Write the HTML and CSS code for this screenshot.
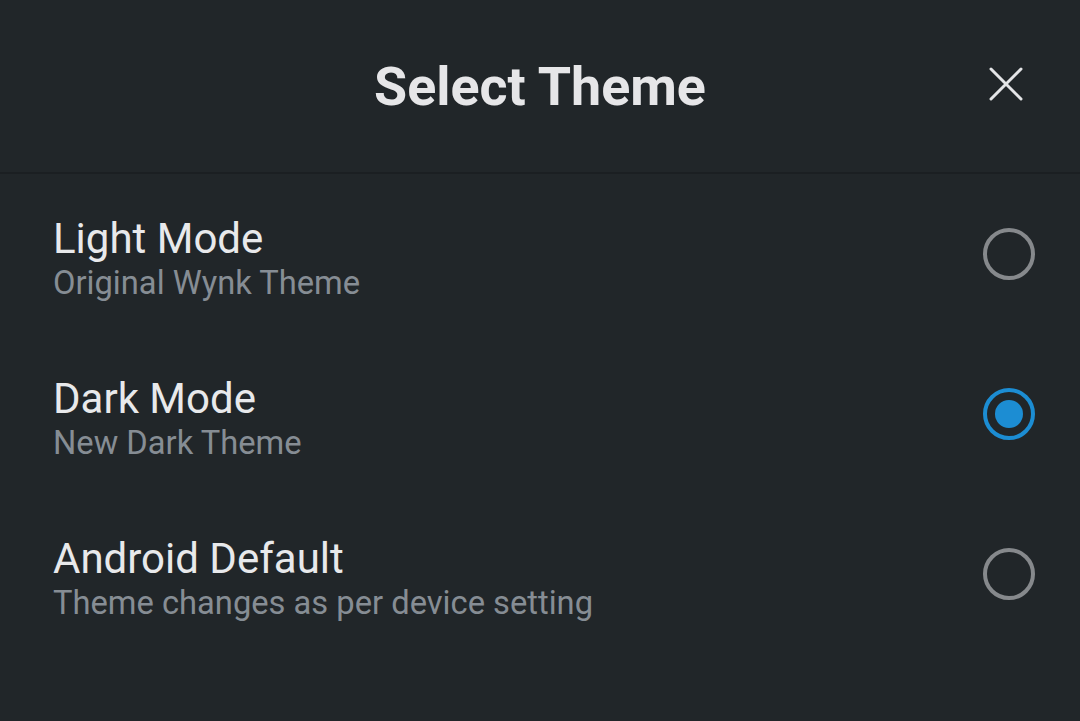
FILE: index.html
```html
<!DOCTYPE html>
<html>
<head>
<meta charset="utf-8">
<link rel="stylesheet" href="styles.css">
</head>
<body>
<div class="sheet">
  <header class="header">
    <h1 class="title">Select Theme</h1>
    <button class="close" aria-label="Close">
      <svg width="34" height="34" viewBox="0 0 34 34"><path d="M2 2 L32 32 M32 2 L2 32" stroke="#e4e5e7" stroke-width="3" stroke-linecap="round"/></svg>
    </button>
  </header>
  <div class="list">
    <div class="row">
      <div class="text">
        <div class="name">Light Mode</div>
        <div class="desc">Original Wynk Theme</div>
      </div>
      <span class="radio"></span>
    </div>
    <div class="row">
      <div class="text">
        <div class="name">Dark Mode</div>
        <div class="desc">New Dark Theme</div>
      </div>
      <span class="radio checked"></span>
    </div>
    <div class="row">
      <div class="text">
        <div class="name">Android Default</div>
        <div class="desc">Theme changes as per device setting</div>
      </div>
      <span class="radio"></span>
    </div>
  </div>
</div>
</body>
</html>
```

FILE: styles.css
```css
html, body {
  margin: 0;
  padding: 0;
  background: #212629;
  font-family: Roboto, "Noto Sans", sans-serif;
}
.sheet {
  width: 1080px;
  height: 721px;
  background: #212629;
}
.header {
  position: relative;
  height: 172px;
  display: flex;
  align-items: center;
  justify-content: center;
  border-bottom: 2px solid #1b1f22;
}
.title {
  margin: 0;
  font-size: 53.8px;
  font-weight: 700;
  color: #e6e6e8;
  line-height: 1;
  margin-top: 2px;
}
.close {
  position: absolute;
  right: 57px;
  top: 67px;
  padding: 0;
  border: 0;
  background: none;
  width: 34px;
  height: 34px;
  display: flex;
}
.list {
  display: flex;
  flex-direction: column;
  padding: 40px 45px 0 53px;
}
.row {
  height: 160px;
  display: flex;
  align-items: flex-start;
  justify-content: space-between;
}
.name {
  font-size: 42px;
  color: #e8e9eb;
  line-height: 50px;
}
.desc {
  font-size: 32.7px;
  color: #868d94;
  line-height: 38px;
  margin-top: 0;
}
.radio {
  width: 44px;
  height: 44px;
  border: 4px solid #86898c;
  border-radius: 50%;
  margin-top: 14px;
  box-sizing: content-box;
  position: relative;
}
.radio.checked {
  border-color: #1c8dd3;
}
.radio.checked::after {
  content: "";
  position: absolute;
  left: 8px;
  top: 8px;
  width: 28px;
  height: 28px;
  border-radius: 50%;
  background: #1c8dd3;
}
```
